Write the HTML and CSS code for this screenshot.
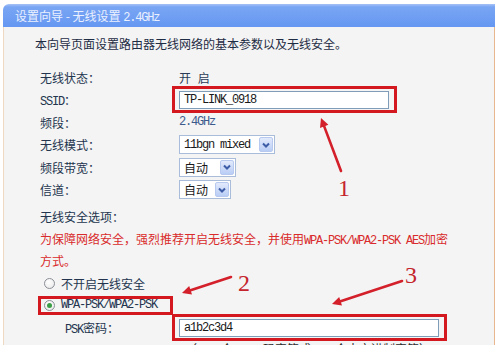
FILE: index.html
```html
<!DOCTYPE html>
<html lang="zh-CN">
<head>
<meta charset="utf-8">
<title>设置向导 - 无线设置</title>
<link rel="stylesheet" href="styles.css">
</head>
<body>
<div class="frame">
  <div class="title">设置向导 - 无线设置 <span class="en">2.4GHz</span></div>
  <div class="panel">
    <p class="intro">本向导页面设置路由器无线网络的基本参数以及无线安全。</p>
    <div class="form">
      <div class="label">无线状态：</div>
      <div class="val gap">开 启</div>

      <div class="label"><span class="en">SSID</span>：</div>
      <div class="val"><span class="mark"><span class="input ssid en">TP-LINK_0918</span></span></div>

      <div class="label">频段：</div>
      <div class="val blue en">2.4GHz</div>

      <div class="label">无线模式：</div>
      <div class="val">
        <span class="select w-mode"><span class="txt en">11bgn mixed</span><span class="btn"><svg width="10" height="8" viewBox="0 0 10 8"><path d="M2 2.5 L5 5.5 L8 2.5" fill="none" stroke="#3d5ca8" stroke-width="2"/></svg></span></span>
      </div>

      <div class="label">频段带宽：</div>
      <div class="val">
        <span class="select w-bw"><span class="txt">自动</span><span class="btn"><svg width="10" height="8" viewBox="0 0 10 8"><path d="M2 2.5 L5 5.5 L8 2.5" fill="none" stroke="#3d5ca8" stroke-width="2"/></svg></span></span>
      </div>

      <div class="label">信道：</div>
      <div class="val">
        <span class="select w-ch"><span class="txt">自动</span><span class="btn"><svg width="10" height="8" viewBox="0 0 10 8"><path d="M2 2.5 L5 5.5 L8 2.5" fill="none" stroke="#3d5ca8" stroke-width="2"/></svg></span></span>
      </div>
    </div>

    <div class="sec">无线安全选项：</div>
    <p class="warn">为保障网络安全，强烈推荐开启无线安全，并使用<span class="en">WPA-PSK/WPA2-PSK AES</span>加密<br>方式。</p>

    <div class="opt"><span class="radio"></span><span>不开启无线安全</span></div>
    <div class="opt marked"><span class="radio on"></span><span class="en">WPA-PSK/WPA2-PSK</span></div>
    <div class="psk">
      <span class="plabel"><span class="en">PSK</span>密码：</span>
      <span class="mark"><span class="input pskin en">a1b2c3d4</span></span>
    </div>
    <div class="hint">（<span class="en">8-63</span>个<span class="en">ASCII</span>码字符或<span class="en">8-64</span>个十六进制字符）</div>
  </div>
</div>

<svg class="notes" width="500" height="345" viewBox="0 0 500 345">
  <g stroke="#d3202a" stroke-width="2.6" stroke-linecap="round">
    <line x1="341" y1="171" x2="324.2" y2="126.4"/>
    <line x1="231" y1="277" x2="190.6" y2="290.2"/>
    <line x1="402" y1="281" x2="340.6" y2="301.2"/>
  </g>
  <g fill="#d3202a">
    <polygon points="321,118 328.4,124.8 320,128"/>
    <polygon points="182,293 189.2,285.9 192,294.5"/>
    <polygon points="332,304 339.2,296.9 342,305.5"/>
  </g>
  <g class="num">
    <text x="344" y="196">1</text>
    <text x="244" y="291">2</text>
    <text x="411" y="283">3</text>
  </g>
</svg>
</body>
</html>
```

FILE: styles.css
```css
html, body {
  margin: 0;
  padding: 0;
  background: #ffffff;
}

body {
  width: 500px;
  height: 345px;
  overflow: hidden;
  position: relative;
  font-family: "Noto Sans CJK SC", sans-serif;
  font-size: 12px;
  color: #23344f;
}

.en {
  font-family: "Liberation Mono", monospace;
  font-size: 12px;
  letter-spacing: -1.2px;
}

.frame {
  margin: 4px 0 0 3px;
  width: 492px;
}

.title {
  height: 23px;
  line-height: 23px;
  padding-left: 12px;
  color: #eaf0ff;
  background: linear-gradient(to bottom, #a6c2f6 0px, #79a5f3 3px, #6597f2 100%);
  border-top-left-radius: 6px;
}

.panel {
  background: #f4f4f4;
  border-left: 1px solid #efd9c3;
  border-right: 1px solid #e7b88e;
  padding-left: 31px;
  height: 330px;
}

.intro {
  margin: 0;
  padding-top: 9px;
  line-height: 16px;
  color: #1e2c44;
}

.form {
  margin: 14px 0 0 5px;
  display: grid;
  grid-template-columns: 139px 1fr;
  grid-auto-rows: 22.5px;
  align-items: center;
}

.val {
  display: flex;
  align-items: center;
  color: #2a3b58;
}

.gap {
  word-spacing: 4px;
}

.blue {
  color: #3c5a8c;
}

.input {
  display: inline-block;
  box-sizing: border-box;
  height: 18px;
  line-height: 16px;
  border: 1px solid #7f9db9;
  background: #ffffff;
  padding-left: 4px;
  color: #1a1a1a;
}

.ssid { width: 210px; }
.pskin { width: 260px; }

.mark {
  position: relative;
  display: inline-flex;
}

.mark::after {
  content: "";
  position: absolute;
  top: -5px;
  bottom: -4px;
  left: -7px;
  right: -8px;
  border: 3px solid #d4181f;
  pointer-events: none;
}

.select {
  display: inline-flex;
  align-items: center;
  box-sizing: border-box;
  height: 19px;
  border: 1px solid #a9bcd9;
  background: #ffffff;
  padding: 1px;
  color: #1a1a1a;
}

.select .txt {
  flex: 1;
  padding-left: 3px;
  white-space: nowrap;
}

.select .btn {
  box-sizing: border-box;
  width: 14px;
  height: 15px;
  border: 1px solid #b7c9ef;
  border-radius: 2px;
  background: linear-gradient(to bottom, #e2eafc, #b9cdf5);
  display: flex;
  align-items: center;
  justify-content: center;
}

.w-mode { width: 96px; }
.w-bw { width: 57px; }
.w-ch { width: 52px; }

.sec {
  margin: 8px 0 0 5px;
  line-height: 16px;
}

.warn {
  margin: 4px 0 0 5px;
  line-height: 19px;
  color: #d92b2b;
}

.opt {
  height: 22px;
  display: flex;
  align-items: center;
  gap: 6px;
  padding-left: 9px;
}

.warn + .opt {
  margin-top: 2px;
}

.marked {
  position: relative;
}

.marked::after {
  content: "";
  position: absolute;
  left: 3px;
  top: 2px;
  width: 135px;
  height: 19px;
  box-sizing: border-box;
  border: 3px solid #d4181f;
}

.radio {
  position: relative;
  width: 11px;
  height: 11px;
  box-sizing: border-box;
  border-radius: 50%;
  border: 1px solid #8a8f96;
  background: radial-gradient(circle at 40% 35%, #ffffff, #e6e6e6);
}

.radio.on::after {
  content: "";
  position: absolute;
  left: 2px;
  top: 2px;
  width: 5px;
  height: 5px;
  border-radius: 50%;
  background: #3a9d45;
}

.psk {
  height: 24px;
  display: flex;
  align-items: center;
  padding-left: 30px;
}

.plabel {
  width: 114px;
}

.hint {
  margin: 1px 0 0 150px;
  line-height: 16px;
  color: #2a2a2a;
}

.notes {
  position: absolute;
  left: 0;
  top: 0;
  pointer-events: none;
}

.num text {
  font-family: "Liberation Serif", serif;
  font-size: 24px;
  fill: #c4242c;
  text-anchor: middle;
}
```
